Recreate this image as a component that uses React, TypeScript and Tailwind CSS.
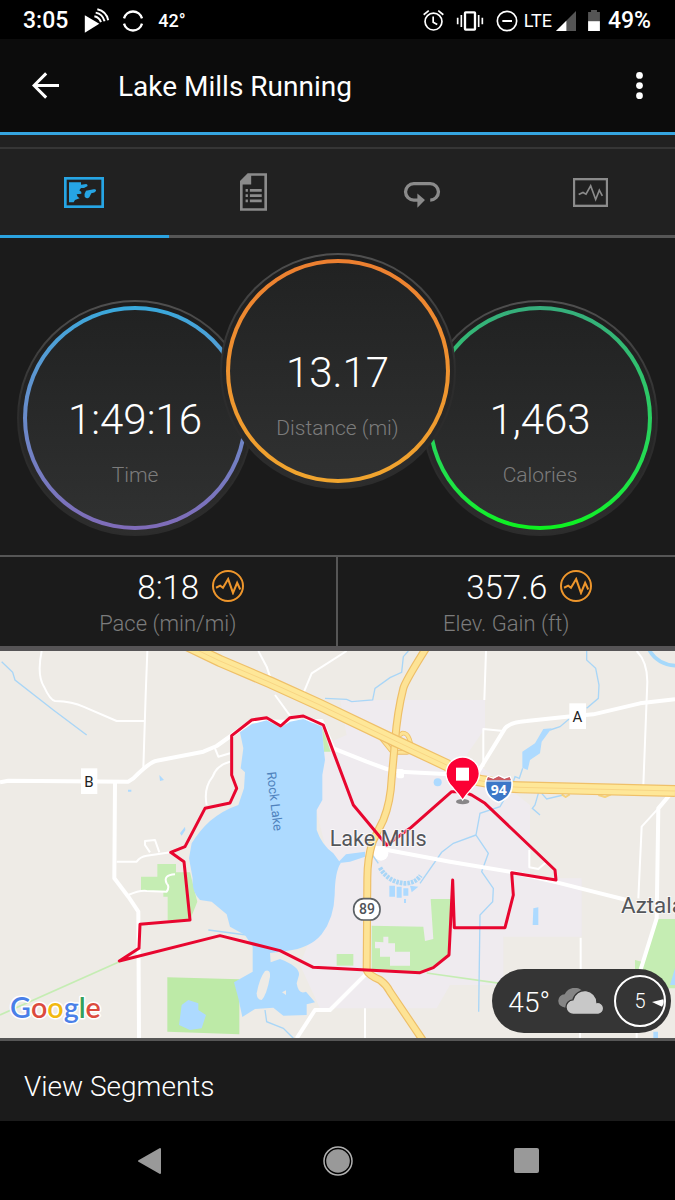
import type { ReactNode } from "react";

function Pulse({ className }: { className: string }) {
  return (
    <svg viewBox="-3 0 78 52" className={className} fill="none" stroke="currentColor" strokeWidth="6" strokeLinejoin="miter" aria-hidden="true">
      <path d="M0 31 L12 25 L20 31 L35 6 L49 46 L61 17 L70 36" />
    </svg>
  );
}

function StatusBar() {
  return (
    <div className="flex h-[39px] items-center justify-between bg-black pt-0.5 pr-6 pl-[23px] text-white">
      <div className="flex items-center">
        <span className="text-[23px] leading-6 font-medium">3:05</span>
        <svg viewBox="255 22 78 76" className="ml-4 h-[25px] w-[26px]" aria-hidden="true">
          <path d="M257 44 L301 70 L257 97 Z" fill="white" />
          <g fill="none" stroke="white" strokeWidth="6">
            <path d="M286 47 Q301 50 306 65" />
            <path d="M290 36 Q311 40 317 62" />
            <path d="M295 26 Q322 32 328 59" />
          </g>
        </svg>
        <svg viewBox="370 26 66 66" className="ml-3 h-[22px] w-[22px]" fill="none" stroke="white" strokeWidth="7" aria-hidden="true">
          <path d="M376 51 A28 28 0 0 1 430 51" />
          <path d="M376 67 A28 28 0 0 0 430 67" />
        </svg>
        <span className="ml-3.5 text-[18px] leading-6 font-medium">42°</span>
      </div>
      <div className="flex items-center">
        <svg viewBox="250 28 62 62" className="h-[21px] w-[21px]" fill="none" stroke="white" strokeWidth="5" aria-label="Alarm set" role="img">
          <circle cx="281" cy="62" r="25" />
          <path d="M280 47 V64 L292 71" />
          <path d="M252 42 L267 30 M295 30 L310 42" />
        </svg>
        <svg viewBox="350 28 84 60" className="ml-3 h-5 w-7" fill="none" stroke="white" strokeWidth="5" aria-label="Vibrate" role="img">
          <rect x="377" y="32" width="30" height="52" rx="2" strokeWidth="7" />
          <path d="M366 40 V76 M355 48 V68 M418 40 V76 M429 48 V68" />
        </svg>
        <svg viewBox="470 26 66 66" className="ml-3 h-[22px] w-[22px]" fill="none" stroke="white" strokeWidth="5" aria-label="Do not disturb" role="img">
          <circle cx="503" cy="59" r="29" />
          <path d="M489 59 H518" strokeWidth="6" />
        </svg>
        <span className="ml-1.5 text-[18px] leading-6">LTE</span>
        <svg viewBox="0 0 58 58" className="ml-1 h-5 w-5" aria-label="Signal" role="img">
          <path d="M58 0 V58 H0 Z" fill="#555" />
          <path d="M30 28 V58 H0 Z" fill="white" />
        </svg>
        <svg viewBox="0 0 36 64" className="ml-3 h-[21px] w-3" aria-label="Battery" role="img">
          <path d="M9 0 H27 V6 H36 V34 H0 V6 H9 Z" fill="#555" />
          <path d="M0 34 H36 V64 H0 Z" fill="white" />
        </svg>
        <span className="ml-2 text-[23px] leading-6 font-medium">49%</span>
      </div>
    </div>
  );
}

function Header() {
  return (
    <header className="flex h-24 items-center border-b-[3px] border-[#35a5e0] bg-[#0c0c0c] text-white">
      <button type="button" aria-label="Back" className="ml-8 flex h-12 w-12 items-center">
        <svg viewBox="98 216 80 80" className="h-[27px] w-[27px]" fill="none" stroke="white" strokeWidth="9" aria-hidden="true">
          <path d="M178 256 H105 M140 220 L104 256 L140 292" />
        </svg>
      </button>
      <h1 className="ml-[38px] grow pt-0.5 text-[28px] leading-8 font-normal">Lake Mills Running</h1>
      <button type="button" aria-label="More options" className="mr-3 flex h-12 w-12 items-center justify-center">
        <svg viewBox="0 0 20 80" className="h-[27px] w-[7px]" fill="white" aria-hidden="true">
          <circle cx="10" cy="10" r="10" />
          <circle cx="10" cy="40" r="10" />
          <circle cx="10" cy="70" r="10" />
        </svg>
      </button>
    </header>
  );
}

function Tab({ label, active, children }: { label: string; active?: boolean; children: ReactNode }) {
  return (
    <button
      type="button"
      role="tab"
      aria-selected={active ? true : false}
      aria-label={label}
      className={
        active
          ? "flex h-[89px] items-center justify-center border-b-[3px] border-[#2ba3e0] text-[#26a5e4]"
          : "flex h-[89px] items-center justify-center border-b-[3px] border-[#565656] text-[#8b8b8b]"
      }
    >
      {children}
    </button>
  );
}

function Tabs() {
  return (
    <div className="bg-[#212121] pt-3">
      <div role="tablist" className="grid grid-cols-4 border-t-2 border-[#363636]">
        <Tab label="Map" active>
          <svg viewBox="195 533 120 93" className="h-[31px] w-10" aria-hidden="true">
            <rect x="199" y="537" width="112" height="85" fill="none" stroke="currentColor" strokeWidth="8" />
            <path
              fill="currentColor"
              d="M210 549 H246 V556 L262 554 Q268 556 265 561 L255 566 H246 L241 573 L247 578 V583 L233 585 L236 592 L242 597 L228 602 L224 609 H210 Z"
            />
            <path fill="currentColor" d="M261 574 L284 570 Q293 568 291 575 Q288 580 277 582 L271 594 Q264 600 257 592 Q255 583 261 574 Z" />
          </svg>
        </Tab>
        <Tab label="Details">
          <svg viewBox="718 522 82 114" className="h-[38px] w-[27px]" fill="none" stroke="currentColor" aria-hidden="true">
            <path d="M743 526 H796 V632 H722 V547 Z" strokeWidth="8" />
            <path d="M742 524 H752 V556 H720 V546 Z" fill="currentColor" stroke="none" />
            <path d="M735 574 H742 M748 574 H784 M735 590 H742 M748 590 H784 M735 606 H742 M748 606 H784" strokeWidth="8" />
          </svg>
        </Tab>
        <Tab label="Laps">
          <svg viewBox="188 546 114 82" className="mt-1 h-[27px] w-[38px]" fill="none" stroke="currentColor" strokeWidth="10" aria-hidden="true">
            <path d="M235 604 H220 A24 24 0 0 1 220 554 H270 A25 25 0 0 1 270 604" />
            <path d="M231 584 L254 604 L231 627 Z" fill="currentColor" stroke="none" />
          </svg>
        </Tab>
        <Tab label="Charts">
          <svg viewBox="699 536 105 86" className="h-[29px] w-[35px]" fill="none" stroke="currentColor" aria-hidden="true">
            <rect x="702" y="539" width="99" height="80" strokeWidth="7" />
            <path d="M716 585 L729 579 L738 584 L752 559 L767 600 L778 572 L787 589" strokeWidth="5" />
          </svg>
        </Tab>
      </div>
    </div>
  );
}

function Dial({ value, label, ring, lift }: { value: string; label: string; ring: string; lift?: boolean }) {
  return (
    <div className={lift ? "z-10 mb-[47px] flex justify-center" : "mt-[47px] flex justify-center"}>
      <div className="size-[236px] shrink-0 rounded-full bg-linear-to-b from-[#505050] via-[#2c2c2c] to-[#2c2c2c] p-[2px]">
        <div className="size-full rounded-full bg-linear-to-b from-[#1d1d1d] to-[#2d2d2d] p-1">
          <div className={`size-full rounded-full bg-linear-to-b p-1 ${ring}`}>
            <div className="flex size-full flex-col items-center rounded-full bg-linear-to-b from-[#212222] to-[#303131] pt-[84px]">
              <div className="text-[42px] leading-[52px] font-light text-white">{value}</div>
              <div className="mt-[15px] text-[21px] leading-7 font-light text-[#7c7c7c]">{label}</div>
            </div>
          </div>
        </div>
      </div>
    </div>
  );
}

function Dials() {
  return (
    <section aria-label="Totals" className="bg-[#1b1b1b] pt-[15px] pb-[19px]">
      <div className="mx-auto grid w-[90%] grid-cols-3">
        <Dial value="1:49:16" label="Time" ring="from-[#38a9dc] to-[#7f6bb8]" />
        <Dial value="13.17" label="Distance (mi)" ring="from-[#ec7f30] to-[#f0a52e]" lift />
        <Dial value="1,463" label="Calories" ring="from-[#36ae7c] to-[#0cf21c]" />
      </div>
    </section>
  );
}

function Metric({ value, label, className }: { value: string; label: string; className: string }) {
  return (
    <div className={`flex flex-col items-center pt-[11px] ${className}`}>
      <div className="ml-[46px] flex items-center gap-[13px]">
        <span className="text-[33px] leading-10 font-light text-white">{value}</span>
        <span className="mb-1 flex size-8 items-center justify-center rounded-full border-2 border-[#ee962c] text-[#ee962c]">
          <Pulse className="h-[18px] w-[27px] shrink-0" />
        </span>
      </div>
      <div className="mt-0.5 text-[22px] leading-7 font-light text-[#7c7c7c]">{label}</div>
    </div>
  );
}

const ROUTE =
  "M1388 440 L1355 440 L1230 550 L1160 600 L1060 480 L970 240 L910 213 L870 218 L842 243 L800 218 L755 225 L695 272 L695 390 L710 430 L690 474 L615 490 L555 605 L512 622 L552 650 L570 825 L420 838 L417 910 L358 948 L660 872 L840 917 L940 967 L1260 983 L1300 968 L1347 930 L1358 705 L1363 848 L1515 848 L1540 750 L1535 683 L1668 705 L1665 675 L1455 475 L1415 450 L1388 440";

const INTERSTATE = "M560 0 L660 48 L810 112 L960 180 L1180 285 L1340 360 Q1400 405 1470 412 Q1500 425 1560 427 L2025 438";
const HIGHWAY = "M1278 10 Q1215 110 1210 130 Q1192 200 1185 290 L1175 400 Q1172 470 1150 525 L1118 590 Q1102 640 1102 700 L1100 975 Q1105 990 1140 1005 Q1160 1020 1170 1040 L1268 1185";

function RouteMap() {
  return (
    <svg viewBox="0 18 2025 1161" preserveAspectRatio="xMidYMid slice" className="block w-full" role="img" aria-label="Route map of Lake Mills">
      <rect width="2025" height="1200" fill="#eeebe6" />
      <path fill="#efebef" d="M1020 165 H1455 V250 L1400 330 L1590 480 V700 H1745 V875 H1510 V1020 H1350 L1310 1090 H960 L900 960 L1000 700 L950 500 L970 300 L1040 270 Z" />

      <g fill="#c5edb3">
        <path d="M472 657 H528 V682 H570 L592 770 L570 825 H503 V755 H490 V738 H423 V695 H472 Z" />
        <path d="M502 997 L718 1003 V1168 L502 1160 Z" fill="#bdeaa7" />
        <path d="M966 245 L992 320 H972 Z" />
        <path d="M1010 927 H1060 V962 H1010 Z" />
        <path d="M1115 842 L1270 845 L1275 888 L1300 882 L1292 762 H1352 L1347 930 L1300 968 L1260 983 L1115 975 Z" />
        <path d="M1975 822 H2025 V1030 H1905 V945 L1925 950 Z" />
      </g>
      <path fill="#efebef" d="M1125 890 L1150 892 V875 H1165 V895 H1185 V920 H1230 V962 H1170 V935 H1140 V910 H1125 Z" />
      <g fill="none" stroke="#c5edb3" strokeWidth="5">
        <path d="M0 1110 L358 950" />
        <path d="M1280 984 L1500 1015" />
      </g>

      <g fill="none" stroke="#a9d6f7" strokeWidth="4">
        <path d="M5 50 L38 82 L45 105 L160 195 L260 270" />
        <path d="M975 160 L1040 163 L1055 170 L1118 165 L1125 130 L1170 98 L1205 82 L1210 35 L1225 18" />
        <path d="M1760 18 V45 L1787 70 L1797 120 L1795 160 L1760 190 M1710 220 L1680 245 L1650 255" />
        <path d="M1568 370 L1558 400 L1545 395 L1535 425 L1500 485 L1440 505 L1428 570 L1465 625 L1445 680 L1480 730 L1478 770 L1440 810 L1436 1100" />
        <path d="M1428 570 L1360 595 L1325 622 L1260 715" />
        <path d="M1615 445 L1605 480 L1597 490 L1620 510 M1625 445 L1640 462 L1690 450" />
        <path d="M625 855 L740 870 M795 1095 L800 1130 L850 1150 L880 1180" />
      </g>
      <path d="M1945 10 Q1970 60 2030 62" fill="none" stroke="#a6d9fb" strokeWidth="11" />

      <g fill="none" stroke="#fff" strokeWidth="6" strokeLinejoin="round">
        <path d="M125 18 Q110 90 132 125 Q150 165 165 168 Q220 170 250 185 L350 228 H435" />
        <path d="M442 18 L437 150 L430 370" />
        <path d="M350 650 H410 Q420 635 440 632 L512 622" />
        <path d="M385 750 Q420 735 440 738 L500 740 Q510 725 500 715 Q488 690 525 688" />
        <path d="M478 622 L465 585 L435 588 L435 600 L450 622" />
        <path d="M690 350 Q650 360 638 395 Q610 430 620 480 M645 310 L655 335 L690 325" />
        <path d="M775 18 L800 65 L815 110 M825 150 L870 212" />
        <path d="M1040 18 L935 85 L910 145" />
        <path d="M1458 18 L1453 165 M1450 365 V252 L1510 258" />
        <path d="M1910 18 Q1942 50 1942 110 L1930 420" />
        <path d="M1588 615 V667 L1615 672 L1640 650 M1742 878 V972 M1095 1090 V1180" />
        <path d="M1975 490 L1925 545 L1915 760 M1740 1160 V1180 M1910 1160 V1180" />
      </g>
      <g fill="none" stroke="#fff" strokeWidth="12" strokeLinejoin="round">
        <path d="M0 412 L25 407 L385 410 L400 400 Q450 350 470 347 L610 320 L650 303 L755 228 L842 230 L965 228 L1000 310 L1100 350 L1160 372 L1200 380 L1350 388" />
        <path d="M345 410 L343 700 L385 755 L415 800 L417 1180" />
        <path d="M1435 380 L1515 250 Q1530 232 1580 228 L1700 215 L1780 208 L1920 175 L2025 163" />
        <path d="M1110 605 L1350 650 L1540 682 L1670 712 L1780 740 L1880 765" />
        <path d="M2030 425 L1975 490 L1970 820 L1920 980" />
        <path d="M1100 985 L990 1095 H945 L890 1180" />
      </g>
      <rect x="1190" y="372" width="22" height="28" rx="6" fill="#fff" />
      <circle cx="1143" cy="625" r="22" fill="#fff" />

      <g fill="#addaff">
        <path d="M720 262 L755 238 L800 226 L842 248 L870 230 L910 222 L966 245 L970 300 L975 345 L967 390 L967 465 L950 495 L950 555 Q965 600 1000 625 L1022 655 Q1005 680 1004 750 Q1002 820 965 868 Q930 910 860 918 L810 924 L812 952 L840 942 Q900 965 897 990 L890 1015 Q895 1050 918 1040 L945 1072 L920 1078 V1110 L850 1112 L820 1088 L765 1092 L727 1116 L715 1060 L702 1012 L758 980 V905 L735 870 L690 845 L680 808 L635 770 L600 765 Q575 740 578 700 L567 640 L575 595 Q600 555 630 528 Q670 495 715 480 L732 430 L735 382 L722 370 L730 310 Z" />
        <path d="M1012 655 L1038 628 L1095 620 V635 L1050 650 Z" />
        <path d="M565 1065 L595 1075 V1095 L618 1110 L605 1150 L570 1155 L537 1140 L545 1080 Z" />
        <path d="M1630 252 L1655 250 L1625 290 L1620 325 L1590 345 L1583 375 L1567 368 L1567 320 L1605 295 Z" />
        <path d="M478 390 L492 405 L480 408 Z M384 434 h10 v6 h-10 Z M540 565 L555 545 L556 555 L545 572 Z" />
        <path d="M1600 790 L1615 787 V840 H1598 Z" />
        <circle cx="1313" cy="412" r="12" />
        <path d="M1168 722 H1185 V755 H1168 Z M1190 725 H1205 V758 H1190 Z M1210 730 H1225 V752 H1210 Z M1230 722 L1255 725 L1235 742 Z M1212 762 h6 v12 h-6 Z" />
        <path d="M2010 1020 L2025 970 V1020 Z M1960 1160 h14 v20 h-14 Z" />
      </g>
      <path d="M1140 668 Q1165 712 1215 715 Q1245 715 1262 692" fill="none" stroke="#a9d6f7" strokeWidth="14" strokeDasharray="8 3" />
      <path d="M1110 620 L1135 655" fill="none" stroke="#a9d6f7" strokeWidth="4" />
      <g fill="#eeebe6">
        <path d="M795 978 Q812 972 810 995 Q800 1050 785 1065 Q770 1065 770 1045 Q778 1000 795 978 Z" />
        <path d="M846 1042 l12 -6 v14 Z" />
      </g>

      <g fill="none" strokeLinejoin="round">
        <path d="M1140 275 L1178 322 H1222 L1236 318 M1192 275 L1208 264 Q1222 264 1228 282 L1236 308" stroke="#eebf68" strokeWidth="14" />
        <path d="M1140 275 L1178 322 H1222 L1236 318 M1192 275 L1208 264 Q1222 264 1228 282 L1236 308" stroke="#fde395" strokeWidth="9" />
        <path d="M1685 448 l12 8 l12 -8 M1795 450 l20 6 l18 -8" stroke="#f6d27c" strokeWidth="6" />
        <path d={HIGHWAY} stroke="#eebf68" strokeWidth="24" />
        <path d={HIGHWAY} stroke="#fde395" strokeWidth="17" />
        <path d={INTERSTATE} stroke="#efc069" strokeWidth="36" />
        <path d={INTERSTATE} stroke="#fee798" strokeWidth="29" />
        <path d={INTERSTATE} stroke="#f8d584" strokeWidth="3" />
      </g>

      <path d={ROUTE} fill="none" stroke="#e8062f" strokeWidth="9" strokeLinejoin="round" />
      <g fontFamily="Roboto, sans-serif" fill="#54565a" stroke="#fff" strokeOpacity="0.7" strokeWidth="6" strokeLinejoin="round" paintOrder="stroke">
        <text x="989" y="602" fontSize="65">Lake Mills</text>
        <text x="1863" y="803" fontSize="67">Aztalan</text>
      </g>
      <text transform="translate(800 382) rotate(83)" fontFamily="Roboto, sans-serif" fontSize="39" fill="#4f82bd">Rock Lake</text>

      <g fontFamily="Roboto, sans-serif" textAnchor="middle">
        <rect x="243" y="370" width="49" height="77" fill="#fff" />
        <text x="267" y="427" fontSize="45" fill="#222">B</text>
        <rect x="1708" y="175" width="50" height="77" fill="#fff" />
        <text x="1732" y="231" fontSize="45" fill="#222">A</text>
        <rect x="1061" y="761" width="79" height="64" rx="30" fill="#fff" stroke="#5c6166" strokeWidth="5" />
        <text x="1101" y="808" fontSize="42" fontWeight="500" fill="#50545a">89</text>
        <path d="M1463 395 L1480 400 L1496 392 L1513 400 L1530 395 L1536 410 Q1540 455 1496 472 Q1452 455 1457 410 Z" fill="#3c78c8" stroke="#fff" strokeWidth="5" />
        <path d="M1464 396 L1480 402 L1496 394 L1513 402 L1529 396 L1533 406 H1460 Z" fill="#cc5a5f" />
        <path d="M1458 408 H1535" stroke="#fff" strokeWidth="3" />
        <text x="1496" y="451" fontSize="42" fontWeight="700" fontFamily="Open Sans, sans-serif" fill="#fff">94</text>
      </g>

      <ellipse cx="1388" cy="470" rx="20" ry="8" fill="#333" opacity="0.55" />
      <path d="M1388 465 Q1376 447 1360 430 Q1338 408 1338 386 A50 50 0 0 1 1438 386 Q1438 408 1416 430 Q1400 447 1388 465 Z" fill="#fb0034" stroke="#fff" strokeWidth="4" />
      <rect x="1368" y="368" width="39" height="39" fill="#fff" />

      <text x="30" y="1119" fontFamily="Lato, sans-serif" fontSize="86" fontWeight="600" stroke="#fff" strokeWidth="9" strokeLinejoin="round" paintOrder="stroke">
        <tspan fill="#4a80e8">G</tspan>
        <tspan fill="#dc4b3e">o</tspan>
        <tspan fill="#f2b90f">o</tspan>
        <tspan fill="#4a80e8">g</tspan>
        <tspan fill="#35a05a">l</tspan>
        <tspan fill="#dc4b3e">e</tspan>
      </text>
    </svg>
  );
}

function Weather() {
  return (
    <div className="absolute right-1 bottom-[5px] flex h-16 items-center rounded-full bg-[#353535] pr-[5px] pl-4 text-white">
      <span className="pt-1 text-[28px] leading-8 font-light">45°</span>
      <svg viewBox="355 1027 142 82" className="ml-2 h-[27px] w-[47px]" aria-label="Cloudy" role="img">
        <path d="M376 1086 A20 20 0 0 1 375 1046 A34 34 0 0 1 433 1040 L425 1086 Z" fill="#858585" />
        <path d="M402 1107 A22 22 0 0 1 400 1063 A37 37 0 0 1 473 1071 A18 18 0 0 1 477 1107 Z" fill="#c8c8c8" stroke="#353535" strokeWidth="4" />
      </svg>
      <span className="relative ml-[9px] flex size-[52px] items-center justify-center rounded-full border-2 border-white text-xl font-light">
        5
        <svg viewBox="0 0 36 22" className="absolute top-[22px] right-0 h-2 w-3" fill="white" aria-hidden="true">
          <path d="M0 8 L34 0 Q38 10 30 22 Z" />
        </svg>
      </span>
    </div>
  );
}

function NavBar() {
  return (
    <nav aria-label="System" className="bg-black px-[8%]">
      <div className="grid h-[79px] grid-cols-3">
        <button type="button" aria-label="Back" className="flex items-center justify-center">
          <svg viewBox="0 0 24 28" className="h-7 w-6" fill="#999" stroke="#999" strokeWidth="2" strokeLinejoin="round" aria-hidden="true">
            <path d="M2 14 L23 2 V26 Z" />
          </svg>
        </button>
        <button type="button" aria-label="Home" className="flex items-center justify-center">
          <svg viewBox="0 0 30 30" className="size-[30px]" aria-hidden="true">
            <circle cx="15" cy="15" r="14" fill="none" stroke="#b0b0b0" strokeWidth="1.5" />
            <circle cx="15" cy="15" r="11.8" fill="#999" />
          </svg>
        </button>
        <button type="button" aria-label="Recent apps" className="flex items-center justify-center">
          <span className="size-[25px] rounded-xs bg-[#999]" />
        </button>
      </div>
    </nav>
  );
}

export default function App() {
  return (
    <div className="min-h-screen overflow-x-hidden bg-black font-[Roboto,sans-serif]">
      <StatusBar />
      <Header />
      <Tabs />
      <main>
        <Dials />
        <section aria-label="Averages" className="grid grid-cols-2 border-t-2 border-b-[5px] border-t-[#565656] border-b-[#565456] bg-[#1b1b1b]">
          <Metric value="8:18" label="Pace (min/mi)" className="h-[89px] border-r-2 border-[#565656]" />
          <Metric value="357.6" label="Elev. Gain (ft)" className="h-[89px]" />
        </section>
        <div className="relative">
          <RouteMap />
          <Weather />
        </div>
        <a href="#segments" className="flex h-[83px] items-center border-t-[3px] border-[#565656] bg-[#1b1b1b] pt-3 pl-6 text-[28px] leading-8 font-light text-white">
          View Segments
        </a>
      </main>
      <NavBar />
    </div>
  );
}
